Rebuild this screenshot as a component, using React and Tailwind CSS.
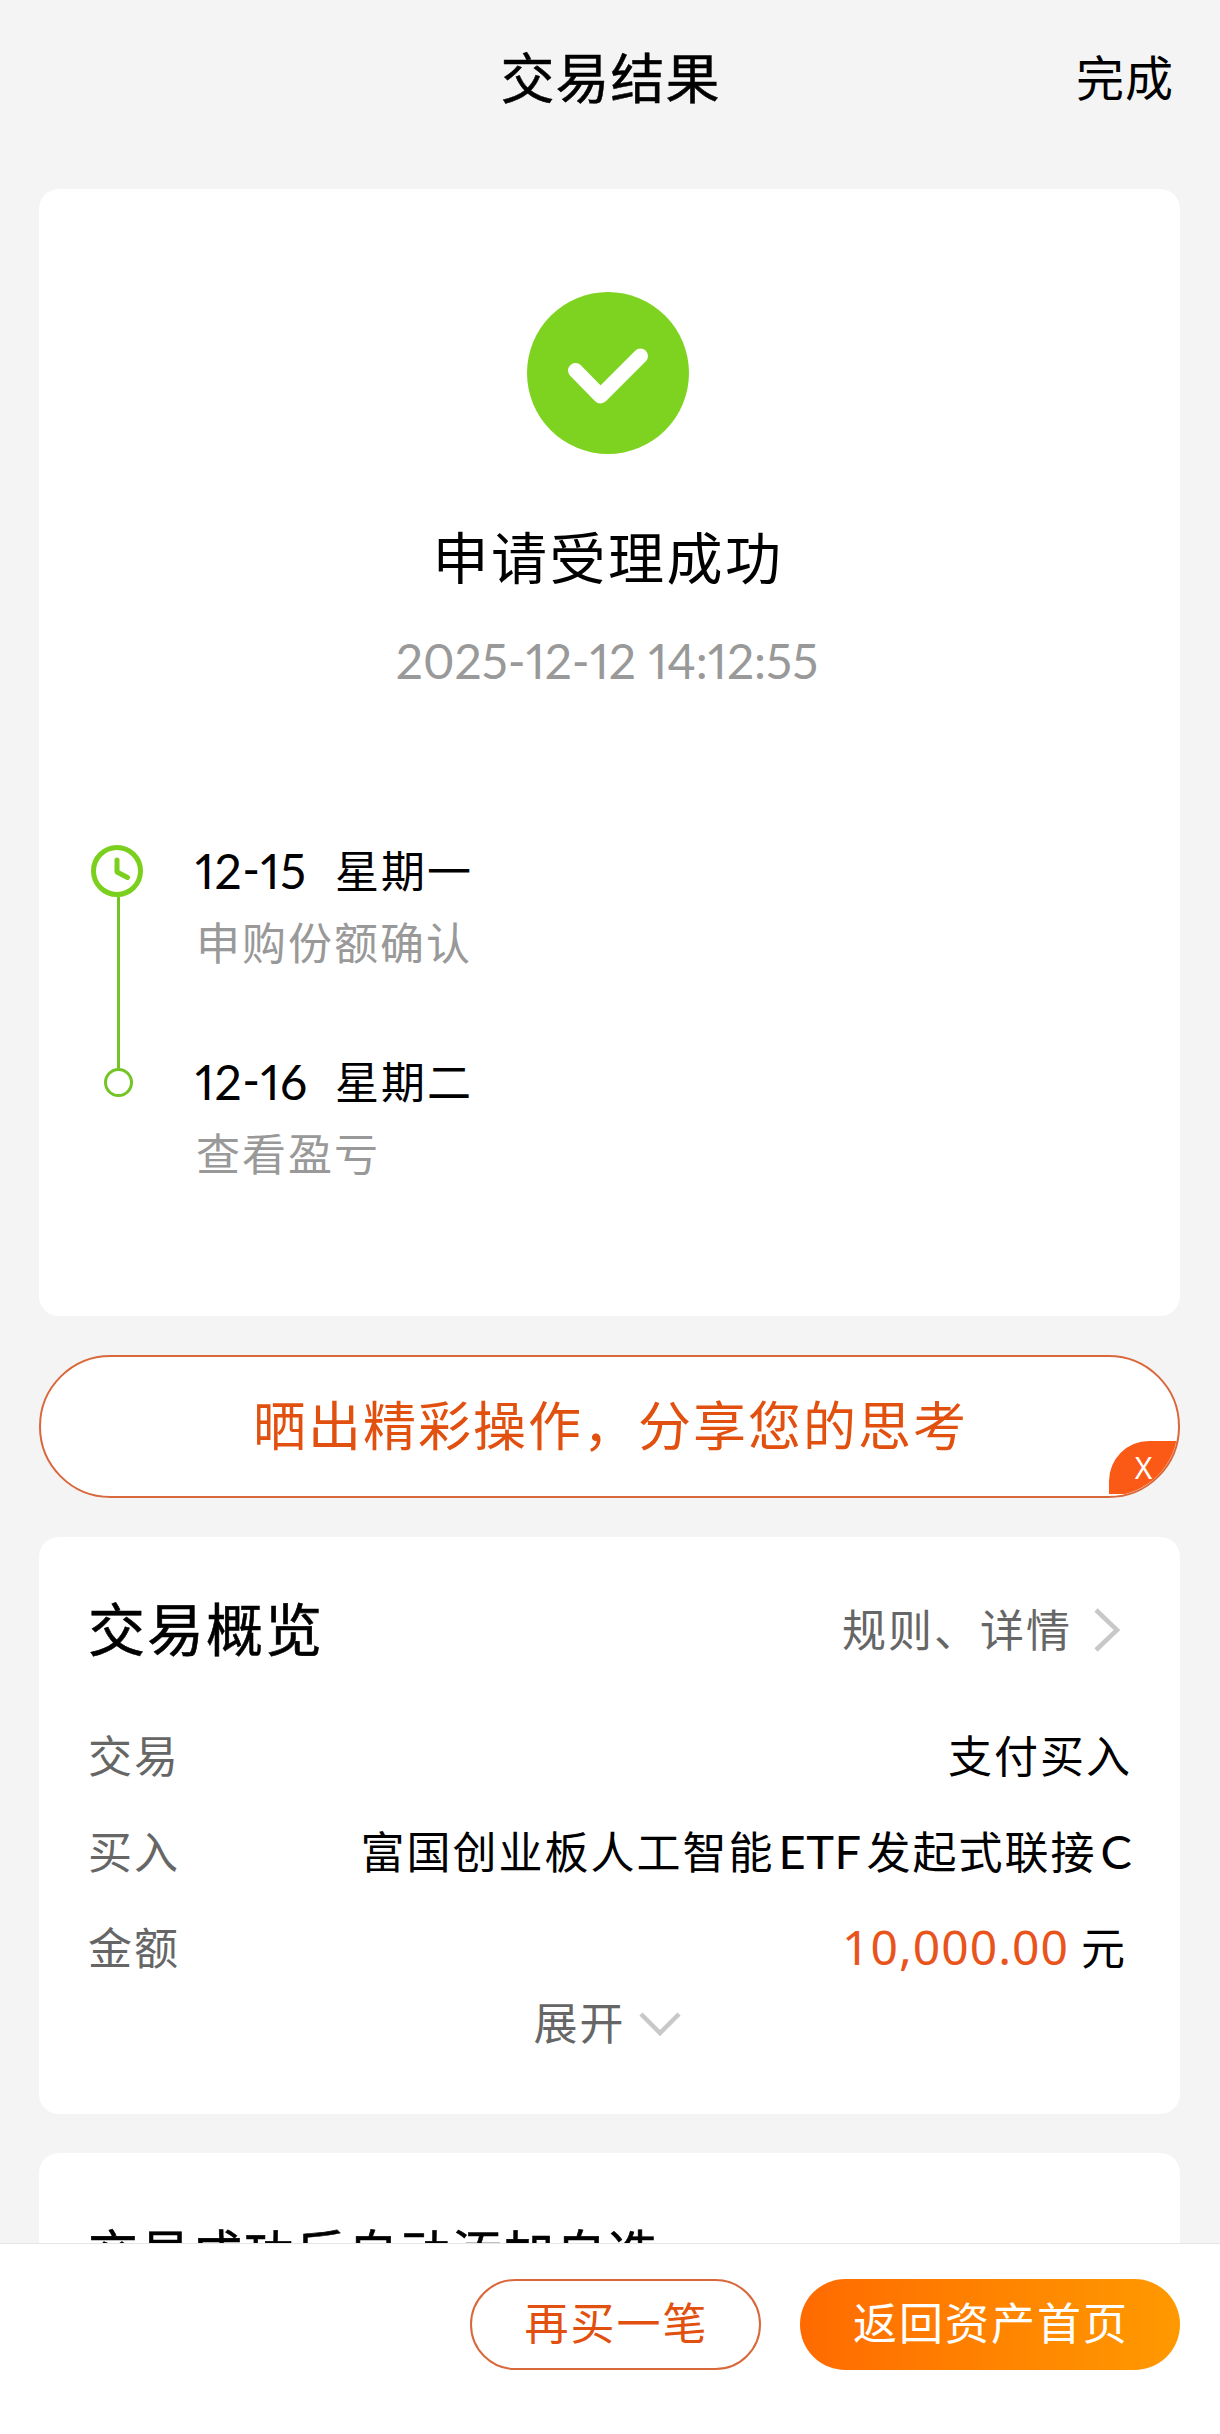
import React from 'react';

const steps = [
    { date: '12-15', weekday: '星期一', text: '申购份额确认' },
    { date: '12-16', weekday: '星期二', text: '查看盈亏' },
];

const SuccessIcon = () => (
    <svg className="w-[162px] h-[162px]" viewBox="0 0 162 162" fill="none">
        <circle cx="81" cy="81" r="81" fill="#7ed321" />
        <path d="M48.5 78.5L73.5 104L113.5 64" stroke="#fff" strokeWidth="15" strokeLinecap="round" strokeLinejoin="round" />
    </svg>
);

const ClockIcon = () => (
    <svg className="w-[52px] h-[52px] -ml-[3px] shrink-0" viewBox="0 0 52 52" fill="none">
        <circle cx="26" cy="26" r="23.5" stroke="#7ad01c" strokeWidth="5" />
        <path d="M26 15V27L36.5 32.5" stroke="#7ad01c" strokeWidth="5" strokeLinecap="round" strokeLinejoin="round" />
    </svg>
);

const Timeline = () => (
    <div className="mt-[142px] px-[52px]">
        {steps.map((step, index) => (
            <div key={step.date} className={index === 0 ? 'flex h-[211px]' : 'flex'}>
                <div className="w-[55px] flex flex-col items-center">
                    {index === 0 ? (
                        <>
                            <div className="h-3" />
                            <ClockIcon />
                            <div className="w-[3px] flex-1 bg-[#74c425]" />
                        </>
                    ) : (
                        <>
                            <div className="w-[3px] h-6 bg-[#74c425]" />
                            <div className="w-[29px] h-[29px] rounded-full border-3 border-[#74c425]" />
                        </>
                    )}
                </div>
                <div className="ml-[50px]">
                    <div className="flex h-[73px] leading-[72px]">
                        <span className="w-[140px] pt-[2px] -ml-px font-[Lato] text-[48px] proportional-nums tracking-[0.5px] [font-feature-settings:'case'] whitespace-nowrap">
                            {step.date}
                        </span>
                        <span className="text-[44px] tracking-[2px]">{step.weekday}</span>
                    </div>
                    <p className="h-[71px] leading-[71px] text-[44px] tracking-[2px] text-[#999]">{step.text}</p>
                </div>
            </div>
        ))}
    </div>
);

const Row = ({ label, children }) => (
    <div className="flex justify-between h-24 leading-[96px] text-[44px] tracking-[2px]">
        <span className="text-[#666]">{label}</span>
        <span>{children}</span>
    </div>
);

const App = () => {
    return (
        <div className="w-[1220px] h-[2434px] flex flex-col bg-[#f4f4f4] text-black overflow-hidden font-['Noto_Sans_CJK_SC',sans-serif]">
            <main className="flex-1 min-h-0 overflow-hidden pl-[39px] pr-10">
                {/* Header */}
                <header className="grid grid-cols-3 items-center h-[189px] pb-[39px]">
                    <span />
                    <h1 className="pl-[2px] text-center text-[54px] tracking-[1px] [-webkit-text-stroke:0.5px_#000]">交易结果</h1>
                    <span className="text-right text-[48px] tracking-[1px] pr-[6px]">完成</span>
                </header>

                {/* Result */}
                <section className="h-[1127px] pt-[103px] bg-white rounded-[20px]">
                    <div className="flex flex-col items-center pr-[3px]">
                        <SuccessIcon />
                        <h2 className="mt-[59px] text-[56px] leading-[84px] tracking-[2.5px]">申请受理成功</h2>
                        <p className="mt-[34px] pr-[2px] font-[Lato] text-[48px] leading-[60px] proportional-nums text-[#999]">
                            2025-12-12 14:12:55
                        </p>
                    </div>
                    <Timeline />
                </section>

                {/* Share */}
                <div className="relative mt-[39px] h-[143px] flex items-center justify-center bg-white border-2 border-[#d9683c] rounded-full overflow-hidden">
                    <span className="pl-[2px] pb-[8px] text-[53px] leading-[80px] tracking-[2px] text-[#e2500f]">晒出精彩操作，分享您的思考</span>
                    <button className="absolute right-0 bottom-[2px] w-[69px] h-[53px] bg-[#fb5a16] rounded-tl-[40px] text-white font-['Noto_Sans'] text-[30px] leading-[53px]">
                        X
                    </button>
                </div>

                {/* Overview */}
                <section className="mt-[39px] h-[577px] pt-[43px] pl-[49px] pr-[48px] bg-white rounded-[20px]">
                    <div className="flex items-center justify-between h-[94px]">
                        <h3 className="text-[57px] tracking-[2px] [-webkit-text-stroke:0.6px_#000]">交易概览</h3>
                        <div className="flex items-center pt-[2px] text-[44px] tracking-[2px] text-[#666]">
                            规则、详情
                            <svg className="w-[28px] h-[44px] mt-[4px] ml-[22px] mr-[10px]" viewBox="0 0 28 44" fill="none">
                                <path d="M2 2L23 22L2 42" stroke="#c8c8c8" strokeWidth="4.5" />
                            </svg>
                        </div>
                    </div>
                    <div className="mt-[32px]">
                        <Row label="交易">支付买入</Row>
                        <Row label="买入">
                            富国创业板人工智能<span className="ml-[4px] mr-[5px] font-[Lato] text-[47px] tracking-[0.5px]">ETF</span>发起式联接<span className="ml-1 font-[Lato] text-[47px] tracking-normal">C</span>
                        </Row>
                        <Row label="金额">
                            <span className="font-['Noto_Sans'] text-[48px] tracking-[1px] text-[#e8541c]">10,000.00</span>
                            <span className="ml-[12px] mr-[5px]">元</span>
                        </Row>
                    </div>
                    <div className="flex items-center justify-center h-[54px] pr-[6px] text-[44px] tracking-[2px] text-[#666]">
                        展开
                        <svg className="w-[42px] h-[26px] mt-[6px] ml-[13px]" viewBox="0 0 42 26" fill="none">
                            <path d="M2 3L21 22L40 3" stroke="#c8c8c8" strokeWidth="4.5" />
                        </svg>
                    </div>
                </section>

                {/* Watchlist */}
                <section className="mt-[39px] h-[300px] pt-[59px] px-[49px] bg-white rounded-[20px]">
                    <h3 className="text-[50px] leading-[76px] tracking-[2px] [-webkit-text-stroke:0.6px_#000]">交易成功后自动添加自选</h3>
                </section>
            </main>

            {/* Bottom bar */}
            <footer className="h-[191px] flex items-start justify-end gap-[39px] pt-[35px] pl-[39px] pr-10 bg-white border-t border-[#e6e6e6] text-[44px] tracking-[2px]">
                <button className="w-[291px] h-[91px] pl-[2px] pb-[7px] rounded-full border-2 border-[#d9683c] text-[#e2500f]">再买一笔</button>
                <button className="w-[380px] h-[91px] pl-[2px] pb-[7px] rounded-full bg-linear-to-r from-[#ff6a00] to-[#ff9900] text-white">返回资产首页</button>
            </footer>
        </div>
    );
};

export default App;
